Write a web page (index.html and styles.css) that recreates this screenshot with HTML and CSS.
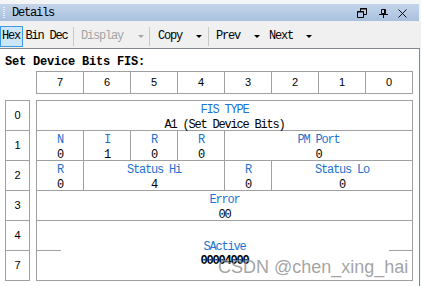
FILE: index.html
```html
<!DOCTYPE html>
<html lang="en">
<head>
  <meta charset="UTF-8" />
  <title>Details</title>
  <link rel="stylesheet" href="styles.css">
</head>
<body>

  <div class="panel">
    <!-- title bar -->
    <div class="titlebar">
      <span class="grip"></span>
      <span class="title">Details</span>
      <span class="win-btns">
        <svg class="ico-restore" width="10" height="10" viewBox="0 0 10 10">
          <path d="M0.5 3.5h6v6h-6z" fill="none" stroke="#000"/>
          <path d="M0 4h7" stroke="#000"/>
          <path d="M3.5 3V0.5h6v6H7" fill="none" stroke="#000"/>
          <path d="M3 1h7" stroke="#000"/>
        </svg>
        <svg class="ico-pin" width="9" height="9" viewBox="0 0 9 9">
          <path d="M2.5 0.5h4v4h-4z" fill="none" stroke="#000"/>
          <path d="M5.5 0.5v4" stroke="#000"/>
          <path d="M0 5.5h9M4.5 5v4" stroke="#000"/>
        </svg>
        <svg class="ico-close" width="9" height="9" viewBox="0 0 9 9">
          <path d="M0.5 0.5l8 8M8.5 0.5l-8 8" stroke="#000" stroke-width="0.9"/>
        </svg>
      </span>
    </div>

    <!-- toolbar -->
    <div class="toolbar">
      <span class="tb-btn active">Hex</span>
      <span class="tb-btn">Bin</span>
      <span class="tb-btn">Dec</span>
      <span class="sep sep-1"></span>
      <span class="tb-text disabled t-display">Display</span>
      <span class="arrow disabled a-display"></span>
      <span class="sep sep-2"></span>
      <span class="tb-text t-copy">Copy</span>
      <span class="arrow a-copy"></span>
      <span class="sep sep-3"></span>
      <span class="tb-text t-prev">Prev</span>
      <span class="arrow a-prev"></span>
      <span class="tb-text t-next">Next</span>
      <span class="arrow a-next"></span>
    </div>

    <!-- FIS details -->
    <div class="content">
      <div class="heading">Set Device Bits FIS:</div>

      <div class="bits">
        <div>7</div><div>6</div><div>5</div><div>4</div>
        <div>3</div><div>2</div><div>1</div><div>0</div>
      </div>

      <div class="fis">
        <div class="dwords">
          <div>0</div><div>1</div><div>2</div>
          <div>3</div><div>4</div><div>7</div>
        </div>

        <div class="fields">
          <div class="cell span-8"><span class="name">FIS TYPE</span><span>A1 (Set Device Bits)</span></div>

          <div class="cell"><span class="name">N</span><span>0</span></div>
          <div class="cell"><span class="name">I</span><span>1</span></div>
          <div class="cell"><span class="name">R</span><span>0</span></div>
          <div class="cell"><span class="name">R</span><span>0</span></div>
          <div class="cell span-4"><span class="name">PM Port</span><span>0</span></div>

          <div class="cell"><span class="name">R</span><span>0</span></div>
          <div class="cell span-3"><span class="name">Status Hi</span><span>4</span></div>
          <div class="cell"><span class="name">R</span><span>0</span></div>
          <div class="cell span-3"><span class="name">Status Lo</span><span>0</span></div>

          <div class="cell span-8"><span class="name">Error</span><span>00</span></div>

          <div class="cell span-8 tall"><span class="name">SActive</span><span class="strong">00004000</span></div>
        </div>
      </div>
    </div>

    <div class="watermark">CSDN @chen_xing_hai</div>
  </div>

</body>
</html>
```

FILE: styles.css
```css
* { margin: 0; padding: 0; box-sizing: border-box; }

body {
  background: #fff;
  font-family: 'Liberation Mono', monospace;
  font-size: 12px;
  color: #000;
}

.panel {
  position: relative;
  width: 421px;
  height: 286px;
  padding-top: 4px;
  background: #f4f5f7;
  overflow: hidden;
}

/* title bar */
.titlebar {
  height: 17px;
  margin-right: 2px;
  display: flex;
  align-items: center;
  background: linear-gradient(#c4d5ea, #a9c1de);
}

.grip {
  width: 2px;
  height: 12px;
  margin-left: 3px;
  background: repeating-linear-gradient(#e9eff7 0 1px, transparent 1px 2px);
}

.title {
  margin-left: 7px;
  letter-spacing: -1.2px;
  line-height: 17px;
  padding-top: 1px;
}

.win-btns {
  margin-left: auto;
  display: flex;
  align-items: center;
}

.ico-restore { margin-top: 1px; }
.ico-pin { margin-left: 12px; margin-top: 2px; }
.ico-close { margin-left: 10px; margin-right: 12px; margin-top: 2px; }

/* toolbar */
.toolbar {
  height: 27px;
  padding-top: 5px;
  display: flex;
  align-items: flex-start;
  background: #f0f0f0;
}

.tb-btn, .tb-text {
  height: 21px;
  line-height: 21px;
  letter-spacing: -1.2px;
}

.tb-btn {
  width: 24px;
  text-align: center;
  padding-right: 1px;
}

.tb-btn.active {
  width: 23px;
  background: #cde6f7;
  border: 1px solid #3c9ae6;
  line-height: 19px;
}

.disabled { color: #a4a4a4; }

.sep {
  width: 1px;
  height: 19px;
  margin-top: 1px;
  background: #c9c9c9;
}

.sep-1 { margin-left: 2px; }
.sep-2 { margin-left: 5px; }
.sep-3 { margin-left: 6px; }

.arrow {
  width: 0;
  height: 0;
  margin-top: 9px;
  border-left: 3px solid transparent;
  border-right: 3px solid transparent;
  border-top: 3px solid #000;
}

.arrow.disabled { border-top-color: #a4a4a4; }

.t-display { margin-left: 7px; }
.a-display { margin-left: 15px; }
.t-copy { margin-left: 8px; }
.a-copy { margin-left: 14px; }
.t-prev { margin-left: 7px; }
.a-prev { margin-left: 14px; }
.t-next { margin-left: 9px; }
.a-next { margin-left: 13px; }

/* details area */
.content {
  width: 420px;
  height: 238px;
  padding: 6px 0 0 5px;
  background: #fff;
  border-top: 1px solid #828790;
  border-right: 1px solid #828790;
}

.heading {
  font-weight: bold;
  letter-spacing: -0.2px;
  line-height: 15px;
}

.bits {
  display: grid;
  grid-template-columns: repeat(8, 47px);
  width: 377px;
  margin: 1px 0 0 31px;
  border-left: 1px solid #a0a0a0;
  border-top: 1px solid #a0a0a0;
}

.bits div {
  height: 22px;
  line-height: 21px;
  text-align: center;
  font-family: 'Liberation Sans', sans-serif;
  font-size: 11px;
  border-right: 1px solid #a0a0a0;
  border-bottom: 1px solid #a0a0a0;
}

.fis {
  display: flex;
  gap: 6px;
  margin-top: 6px;
}

.dwords {
  width: 25px;
  border-left: 1px solid #a0a0a0;
  border-top: 1px solid #a0a0a0;
}

.dwords div {
  height: 30px;
  line-height: 29px;
  text-align: center;
  font-family: 'Liberation Sans', sans-serif;
  font-size: 11px;
  border-right: 1px solid #a0a0a0;
  border-bottom: 1px solid #a0a0a0;
}

.fields {
  display: grid;
  grid-template-columns: repeat(8, 47px);
  grid-auto-rows: 30px;
  width: 377px;
  border-left: 1px solid #a0a0a0;
  border-top: 1px solid #a0a0a0;
}

.cell {
  display: flex;
  flex-direction: column;
  align-items: center;
  padding-top: 2px;
  line-height: 15px;
  letter-spacing: -1.2px;
  white-space: nowrap;
  border-right: 1px solid #a0a0a0;
  border-bottom: 1px solid #a0a0a0;
}

.cell .name { color: #1c74d2; }
.cell .strong { font-weight: bold; }

.span-3 { grid-column: span 3; }
.span-4 { grid-column: span 4; }
.span-8 { grid-column: span 8; }

.tall {
  position: relative;
  grid-row: span 2;
  padding-top: 19px;
  line-height: 14px;
}

.tall::before,
.tall::after {
  content: '';
  position: absolute;
  top: 29px;
  height: 1px;
  background: #a0a0a0;
}

.tall::before { left: 0; width: 24px; }
.tall::after { right: 0; width: 23px; }

.watermark {
  position: absolute;
  left: 218px;
  top: 258px;
  font-family: 'Liberation Sans', sans-serif;
  font-size: 18px;
  line-height: 18px;
  color: rgba(140, 140, 140, 0.8);
  white-space: nowrap;
}
```
